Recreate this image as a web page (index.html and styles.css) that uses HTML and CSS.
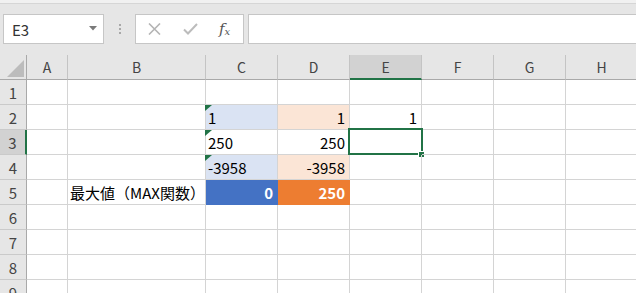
FILE: index.html
```html
<!DOCTYPE html>
<html lang="ja">
<head>
<meta charset="utf-8">
<title>Excel MAX</title>
<link rel="stylesheet" href="styles.css">
</head>
<body>
<div class="app">
  <div class="topstrip"></div>
  <div class="fbar">
    <div class="namebox">
      <span class="nb-text">E3</span>
      <svg class="dd" width="8" height="5" viewBox="0 0 8 5"><path d="M0 0H8L4 4.5Z" fill="#7a7a7a"/></svg>
    </div>
    <div class="grip"><i></i><i></i><i></i></div>
    <div class="fbtns">
      <svg class="ic" width="13" height="12" viewBox="0 0 13 12"><path d="M1 0.5L12 11.5M12 0.5L1 11.5" stroke="#b4b4b4" stroke-width="1.6" fill="none"/></svg>
      <svg class="ic" width="15" height="12" viewBox="0 0 15 12"><path d="M1 6.5L5 10.5L14 1" stroke="#bcbcbc" stroke-width="2" fill="none"/></svg>
      <span class="fx">f<sub>x</sub></span>
    </div>
    <div class="finput"></div>
  </div>
  <div class="sheet">
    <div class="hd corner"><span class="tri"></span></div>
    <div class="hd ch">A</div>
    <div class="hd ch">B</div>
    <div class="hd ch">C</div>
    <div class="hd ch">D</div>
    <div class="hd ch sel-h">E</div>
    <div class="hd ch">F</div>
    <div class="hd ch">G</div>
    <div class="hd ch">H</div>

    <div class="hd rh">1</div>
    <div class="c"></div><div class="c"></div><div class="c"></div><div class="c"></div><div class="c"></div><div class="c"></div><div class="c"></div><div class="c"></div>

    <div class="hd rh">2</div>
    <div class="c"></div><div class="c"></div>
    <div class="c blue-l txt">1</div>
    <div class="c org-l num">1</div>
    <div class="c num">1</div>
    <div class="c"></div><div class="c"></div><div class="c"></div>

    <div class="hd rh sel-r">3</div>
    <div class="c"></div><div class="c"></div>
    <div class="c txt">250</div>
    <div class="c num">250</div>
    <div class="c active"><div class="selbox"></div><div class="handle"></div></div>
    <div class="c"></div><div class="c"></div><div class="c"></div>

    <div class="hd rh">4</div>
    <div class="c"></div><div class="c"></div>
    <div class="c blue-l txt">-3958</div>
    <div class="c org-l num">-3958</div>
    <div class="c"></div><div class="c"></div><div class="c"></div><div class="c"></div>

    <div class="hd rh">5</div>
    <div class="c"></div>
    <div class="c label">最大値（MAX関数）</div>
    <div class="c blue-d num bold">0</div>
    <div class="c org-d num bold">250</div>
    <div class="c"></div><div class="c"></div><div class="c"></div><div class="c"></div>

    <div class="hd rh">6</div>
    <div class="c"></div><div class="c"></div><div class="c"></div><div class="c"></div><div class="c"></div><div class="c"></div><div class="c"></div><div class="c"></div>
    <div class="hd rh">7</div>
    <div class="c"></div><div class="c"></div><div class="c"></div><div class="c"></div><div class="c"></div><div class="c"></div><div class="c"></div><div class="c"></div>
    <div class="hd rh">8</div>
    <div class="c"></div><div class="c"></div><div class="c"></div><div class="c"></div><div class="c"></div><div class="c"></div><div class="c"></div><div class="c"></div>
    <div class="hd rh">9</div>
    <div class="c"></div><div class="c"></div><div class="c"></div><div class="c"></div><div class="c"></div><div class="c"></div><div class="c"></div><div class="c"></div>
  </div>
</div>
</body>
</html>
```

FILE: styles.css
```css
* { box-sizing: border-box; }
html, body { margin: 0; padding: 0; }
body {
  width: 636px;
  height: 293px;
  overflow: hidden;
  background: #e6e6e6;
  font-family: "Noto Sans CJK JP", "Noto Sans", sans-serif;
}
.app { width: 636px; overflow: hidden; }

.topstrip {
  height: 4px;
  background: #f1f1f1;
  border-bottom: 1px solid #d6d6d6;
}

.fbar {
  display: flex;
  align-items: stretch;
  height: 30px;
  margin-top: 10px;
  margin-bottom: 11px;
}
.namebox {
  margin-left: 3px;
  width: 101px;
  background: #fff;
  border: 1px solid #c6c6c6;
  display: flex;
  align-items: center;
  justify-content: space-between;
  padding: 0 6px 0 8px;
}
.nb-text { font-size: 15px; color: #333; line-height: 1; }
.dd { display: block; margin-top: -2px; }

.grip {
  width: 31px;
  display: flex;
  flex-direction: column;
  align-items: center;
  justify-content: center;
  gap: 2px;
}
.grip i { display: block; width: 2px; height: 2px; background: #a8a8a8; }

.fbtns {
  width: 109px;
  background: #fff;
  border: 1px solid #c6c6c6;
  display: flex;
  align-items: center;
  padding-left: 12px;
  gap: 22px;
}
.fx {
  font-family: "DejaVu Serif", "Liberation Serif", serif;
  font-style: italic;
  font-size: 15px;
  color: #555;
  line-height: 1;
  margin-left: -1px;
}
.fx sub { font-size: 10px; vertical-align: -1px; }

.finput {
  flex: 1;
  margin-left: 4px;
  margin-right: -2px;
  background: #fff;
  border: 1px solid #c6c6c6;
}

.sheet {
  display: grid;
  grid-template-columns: 27px 41px 138px 72px 72px 72px 72px 72px 72px;
  grid-auto-rows: 25px;
  width: 638px;
  background: #fff;
}

.hd {
  background: #e6e6e6;
  color: #444;
  display: flex;
  align-items: center;
  justify-content: center;
  line-height: 1;
}
.ch {
  font-size: 14px;
  border-right: 1px solid #c4c4c4;
  border-bottom: 1px solid #a9a9a9;
}
.corner {
  position: relative;
  border-right: 1px solid #a9a9a9;
  border-bottom: 1px solid #a9a9a9;
}
.corner .tri {
  position: absolute;
  right: 2px;
  bottom: 2px;
  width: 17px;
  height: 17px;
  background: #bcbcbc;
  clip-path: polygon(100% 0, 100% 100%, 0 100%);
}
.rh {
  font-size: 15px;
  border-right: 1px solid #a9a9a9;
  border-bottom: 1px solid #cacaca;
}
.sel-h {
  background: #d2d2d2;
  border-bottom: 2px solid #217346;
}
.sel-r {
  background: #d2d2d2;
  border-right: 2px solid #217346;
}

.c {
  position: relative;
  border-right: 1px solid #d4d4d4;
  border-bottom: 1px solid #d4d4d4;
  font-size: 15px;
  color: #000;
  display: flex;
  align-items: center;
  line-height: 1;
  white-space: nowrap;
  padding-top: 1px;
}
.txt { padding-left: 2px; }
.txt::before {
  content: "";
  position: absolute;
  left: -1px;
  top: 0;
  width: 7px;
  height: 6px;
  background: #217346;
  clip-path: polygon(0 0, 100% 0, 0 100%);
}
.num { justify-content: flex-end; padding-right: 4px; }
.bold { font-weight: 700; color: #fff; }
.label { padding-left: 2px; }

.blue-l { background: #dae3f3; }
.org-l { background: #fbe5d6; }
.blue-d { background: #4472c4; border-right-color: #4472c4; border-bottom-color: #4472c4; }
.org-d { background: #ed7d31; border-right-color: #ed7d31; border-bottom-color: #ed7d31; }

.selbox {
  position: absolute;
  left: -2px;
  top: -2px;
  width: 75px;
  height: 27px;
  border: 2px solid #217346;
}
.handle {
  position: absolute;
  left: 68px;
  top: 21px;
  width: 7px;
  height: 7px;
  background: #217346;
  border: 1px solid #fff;
}
```
